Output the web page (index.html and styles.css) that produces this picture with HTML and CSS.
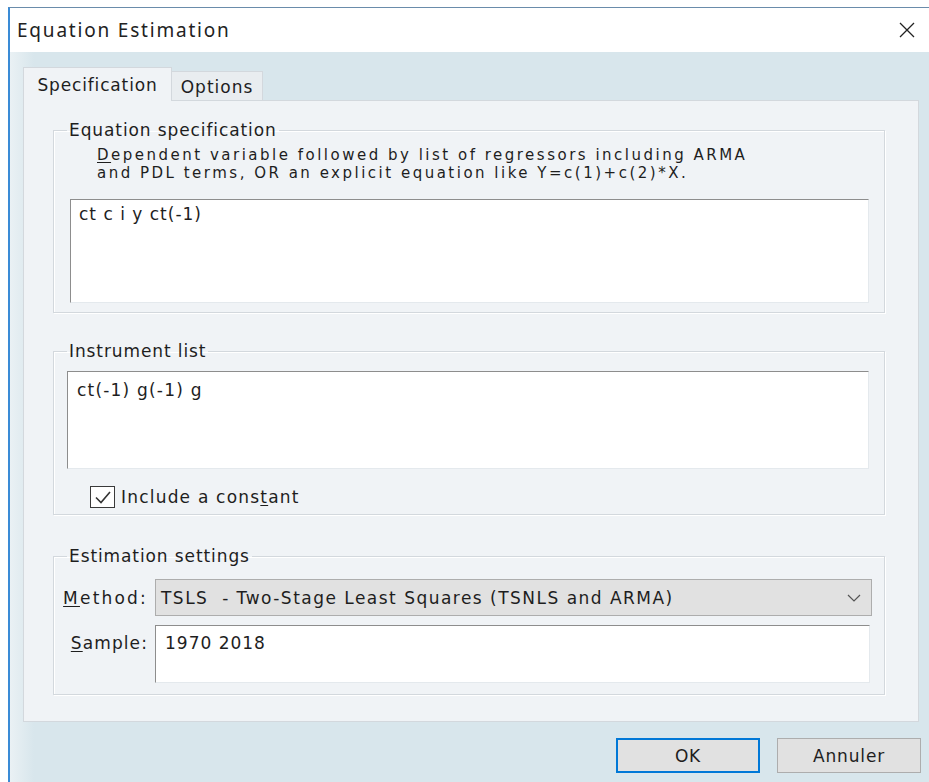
FILE: index.html
```html
<!DOCTYPE html>
<html lang="en">
<head>
<meta charset="utf-8">
<title>Equation Estimation</title>
<link rel="stylesheet" href="styles.css">
</head>
<body>
<div class="window">
  <div class="titlebar">
    <span class="title">Equation Estimation</span>
    <svg class="close" width="16" height="16" viewBox="0 0 16 16" aria-label="Close">
      <path d="M1 1L15 15M15 1L1 15"/>
    </svg>
  </div>
  <div class="client">
    <div class="tabstrip">
      <div class="tab tab-active">Specification</div>
      <div class="tab tab-options">Options</div>
    </div>
    <div class="panel">
      <fieldset class="group group-eq">
        <legend>Equation specification</legend>
        <p class="hint"><span class="hint-line"><u>D</u>ependent variable followed by list of regressors including ARMA</span><span class="hint-line">and PDL terms, OR an explicit equation like Y=c(1)+c(2)*X.</span></p>
        <div class="edit edit-eq">ct c i y ct(-1)</div>
      </fieldset>

      <fieldset class="group group-inst">
        <legend>Instrument list</legend>
        <div class="edit edit-inst">ct(-1) g(-1) g</div>
        <div class="check-row">
          <span class="checkbox">
            <svg width="20" height="17" viewBox="0 0 20 17"><polyline points="3,8.5 8,13.5 17,3"/></svg>
          </span>
          <span class="check-label">Include a cons<u>t</u>ant</span>
        </div>
      </fieldset>

      <fieldset class="group group-est">
        <legend>Estimation settings</legend>
        <div class="field-row row-method">
          <span class="field-label label-method"><u>M</u>ethod:</span>
          <div class="combo">
            <span class="combo-text">TSLS  - Two-Stage Least Squares (TSNLS and ARMA)</span>
            <svg class="chevron" width="14" height="8" viewBox="0 0 14 8"><polyline points="1,1 7,7 13,1"/></svg>
          </div>
        </div>
        <div class="field-row row-sample">
          <span class="field-label label-sample"><u>S</u>ample:</span>
          <div class="edit edit-sample">1970 2018</div>
        </div>
      </fieldset>
    </div>
    <div class="buttons">
      <button class="btn btn-default">OK</button>
      <button class="btn">Annuler</button>
    </div>
  </div>
</div>
</body>
</html>
```

FILE: styles.css
```css
body {
  margin: 0;
  background: #ffffff;
  font-family: "DejaVu Sans", sans-serif;
  font-size: 17px;
  letter-spacing: 1px;
  color: #1e1e1e;
}

u {
  text-decoration-thickness: 1px;
  text-underline-offset: 2px;
}

/* dialog frame */
.window {
  margin: 7px 0 0 8px;
  height: 775px;
  box-sizing: border-box;
  border-top: 1px solid #6a8cab;
  border-left: 2px solid #3a8bd6;
  background: linear-gradient(to right, #eaf1f4 0, #d8e6ec 24px);
  overflow: hidden;
}

.titlebar {
  height: 44px;
  background: #ffffff;
  display: flex;
  align-items: center;
  justify-content: space-between;
  padding: 0 14px 0 7px;
}

.title {
  font-family: "Noto Sans", sans-serif;
  font-size: 19px;
  letter-spacing: 1.8px;
  color: #222222;
}

.close path {
  stroke: #222222;
  stroke-width: 1.3;
  fill: none;
}

.client {
  padding: 15px 0 0 13px;
}

/* tabs */
.tabstrip {
  display: flex;
  align-items: flex-end;
  height: 34px;
  margin-bottom: -1px;
  position: relative;
  z-index: 1;
}

.tab {
  height: 30px;
  box-sizing: border-box;
  display: flex;
  align-items: center;
  justify-content: center;
  border: 1px solid #d3d8dd;
  border-bottom: none;
  background: #e9edf0;
}

.tab-active {
  width: 149px;
  height: 34px;
  background: #f0f3f6;
  letter-spacing: 0.85px;
}

.tab-options {
  width: 91px;
  border-left: none;
  border-bottom: 1px solid #d3d8dd;
  padding-top: 2px;
}

.panel {
  width: 896px;
  height: 622px;
  box-sizing: border-box;
  border: 1px solid #d3d8dd;
  background: #f0f3f6;
  padding-left: 29px;
  overflow: hidden;
}

/* group boxes */
.group {
  margin: 0;
  padding: 0;
  width: 832px;
  min-width: 0;
  box-sizing: border-box;
  border: 1px solid #d3d8dd;
  box-shadow: inset 1px 1px 0 #ffffff, 1px 1px 0 #ffffff;
}

.group legend {
  margin-left: 13px;
  padding: 0 2px;
  line-height: 18px;
  letter-spacing: 0.9px;
}

.group-eq { margin-top: 20px; }
.group-inst { margin-top: 29px; }
.group-est { margin-top: 32px; }

.hint {
  margin: 8px 0 0 43px;
  font-size: 15px;
  line-height: 17.5px;
  letter-spacing: 2.5px;
}

.hint-line {
  display: block;
}

/* text fields */
.edit {
  background: #ffffff;
  box-sizing: border-box;
  border: 1px solid;
  border-color: #8d8d8d #e4e9ed #e4e9ed #8d8d8d;
  line-height: 18px;
}

.edit-eq {
  margin: 17px 15px 9px 16px;
  height: 104px;
  padding: 5px 8px;
}

.edit-inst {
  margin: 11px 15px 0 13px;
  height: 98px;
  padding: 9px 9px;
  letter-spacing: 1.2px;
}

.check-row {
  display: flex;
  align-items: center;
  height: 24px;
  margin: 16px 0 5px 36px;
}

.checkbox {
  width: 25px;
  height: 22px;
  box-sizing: border-box;
  border: 1.5px solid #3a3a3a;
  background: #ffffff;
  margin-right: 6px;
  display: flex;
  align-items: center;
  justify-content: center;
}

.checkbox polyline {
  fill: none;
  stroke: #333333;
  stroke-width: 1.6;
}

.check-label {
  letter-spacing: 1.2px;
}

.field-row {
  display: flex;
}

.field-label {
  width: 94px;
  flex: none;
  text-align: right;
  margin-right: 7px;
}

.label-method { letter-spacing: 2.2px; }
.label-sample { letter-spacing: 1.1px; }

.row-method {
  margin: 14px 12px 0 0;
  height: 37px;
  align-items: center;
}

.combo {
  flex: 1;
  height: 37px;
  box-sizing: border-box;
  background: #e1e1e1;
  border: 1px solid #adadad;
  display: flex;
  align-items: center;
  justify-content: space-between;
  padding: 0 10px 0 5px;
}

.combo-text {
  white-space: pre;
  letter-spacing: 1.48px;
}

.chevron polyline {
  fill: none;
  stroke: #555555;
  stroke-width: 1.2;
}

.row-sample {
  margin: 9px 14px 11px 0;
  align-items: flex-start;
}

.row-sample .field-label {
  padding-top: 9px;
  line-height: 18px;
}

.edit-sample {
  flex: 1;
  height: 58px;
  padding: 8px 9px;
}

/* dialog buttons */
.buttons {
  display: flex;
  justify-content: flex-end;
  gap: 17px;
  margin-top: 16px;
  padding-right: 8px;
}

.btn {
  width: 144px;
  height: 35px;
  box-sizing: border-box;
  padding: 0;
  background: #e1e1e1;
  border: 1px solid #adadad;
  font: inherit;
  letter-spacing: 0.85px;
  color: #1e1e1e;
}

.btn-default {
  border: 2px solid #0078d7;
}
```
